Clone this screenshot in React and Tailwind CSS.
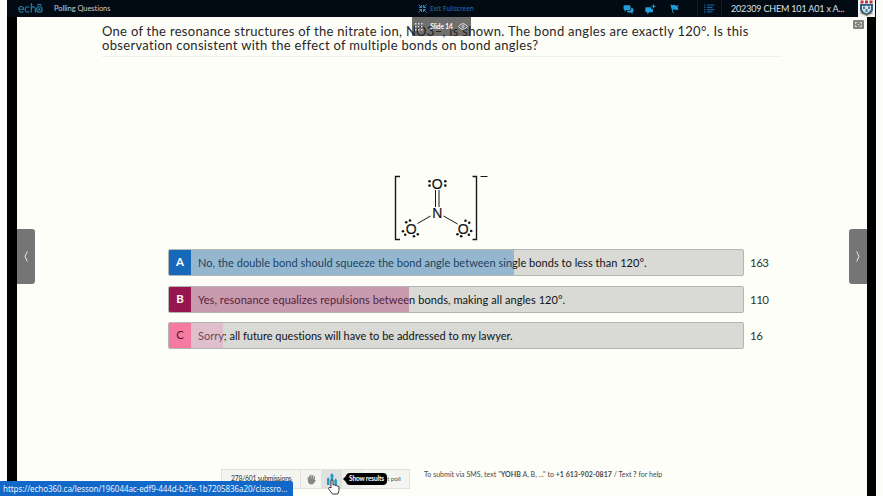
import React from "react";

const answers = [
  {
    letter: "A",
    text: "No, the double bond should squeeze the bond angle between single bonds to less than 120°.",
    count: 163,
    badge: "bg-[#1569b8] text-white font-bold",
    fill: "bg-[#2d82c5]/40 w-[323px]",
    track: "tracking-[0.03px]",
  },
  {
    letter: "B",
    text: "Yes, resonance equalizes repulsions between bonds, making all angles 120°.",
    count: 110,
    badge: "bg-[#981650] text-white font-bold",
    fill: "bg-[#ae3a72]/40 w-[218px]",
    track: "tracking-[0.06px]",
  },
  {
    letter: "C",
    text: "Sorry; all future questions will have to be addressed to my lawyer.",
    count: 16,
    badge: "bg-[#f57aa2] text-[#4b1530]",
    fill: "bg-[#eb96be]/40 w-[32px]",
    track: "tracking-[-0.01px]",
  },
];

function Header() {
  return (
    <header className="flex h-[17px] w-[869px] items-center bg-[#020a14] pl-[11px]">
      <div className="flex w-[36px] shrink-0 items-center">
        <svg width="25" height="13" viewBox="0 0 25 13" fill="none" stroke="#287fa9" strokeWidth="1.1">
          <path d="M1 7.2h4.6C5.6 3.6 0.8 3.6 0.8 7.3c0 3.2 3.2 3.6 4.6 2M11.3 5.4C9.4 4 7.2 5 7.2 7.4s2.3 3.5 4.1 2M13.3 1v9.6M13.3 7.2c0-3.2 4-3.2 4-.3v3.7" />
          <circle cx="21.4" cy="7.5" r="2.7" />
          <circle cx="21.4" cy="7.5" r="0.6" />
          <path d="M19.2 3.4c1.2-1.1 3.2-1.1 4.4 0" />
        </svg>
      </div>
      <span className="w-[364px] shrink-0 text-[7.5px] leading-[16px] tracking-[-0.06px] text-[#c6ced4]">Polling Questions</span>
      <svg className="shrink-0" width="9" height="9" viewBox="0 0 9 9" fill="none" stroke="#2f86c6" strokeWidth="1">
        <path d="M0.5 0.5l3 3M1 3.5h2.5V1M8.5 0.5l-3 3M8 3.5H5.5V1M0.5 8.5l3-3M1 5.500h2.500V8M8.500 8.500l-3-3M8 5.500H5.500V8" />
      </svg>
      <span className="w-[196px] shrink-0 pl-[3px] font-['Noto_Sans',sans-serif] text-[6.5px] font-medium leading-[17px] tracking-[-0.05px] text-[#20679f]">Exit Fullscreen</span>
      <div className="flex w-[74px] shrink-0 items-center pt-px">
        <svg width="11" height="9" viewBox="0 0 11 9" fill="#209fdb">
          <path d="M1.8 0.2h4.4q1.3 0 1.3 1.3v2.2Q7.500 5 6.200 5H3.500L1.600 6.700V5Q.5 4.700.5 3.500v-2Q.5.2 1.800.2Z" />
          <path d="M8.200 2.800q2.300 0 2.300 1.500v1.800q0 1-1 1.200v1.600L7.600 7.400H5Q4 7.300 4 5.700h2.600q1.600-.3 1.600-2Z" />
        </svg>
        <svg className="ml-[11px]" width="11" height="11" viewBox="0 0 11 11" fill="#209fdb">
          <path d="M1.200 3.200h5v1.900H8v2.200q0 1-1 1H4.400L2.300 10.200V8.300H1.200q-.9 0-.9-1V4.200q0-1 .9-1Z" />
          <path d="M8 0.400h1v1.400h1.500v1H9v1.500H8V2.800H6.600v-1H8Z" />
        </svg>
        <svg className="ml-[14px]" width="9" height="10" viewBox="0 0 9 10" fill="#209fdb">
          <path d="M.4.8 1.300.5l.4.800q1.800-1 3.300-.1T8.700 1.100L7.500 3.500 8.600 5.600q-2 .8-3.500 0t-2.300.1l1 3.500-.8.300Z" />
        </svg>
      </div>
      <div className="flex h-[17px] w-[25px] shrink-0 items-center justify-center border-x border-[#101c28]">
        <svg width="11" height="9" viewBox="0 0 11 9" stroke="#165f9b" strokeWidth="1.200">
          <path d="M0 1h1.500M3 1h7.500M0 3.300h1.500M3 3.300h5.500M0 5.600h1.500M3 5.600h7.500M0 7.900h1.500M3 7.900h5.500" />
        </svg>
      </div>
      <span className="w-[136px] shrink-0 whitespace-nowrap pl-[9px] text-[9px] leading-[16px] tracking-[-0.17px] text-[#dce1e4]">202309 CHEM 101 A01 x A...</span>
      <div className="flex h-[17px] w-[17px] shrink-0 items-center justify-center bg-[#f1f2f1]">
        <svg width="15" height="17" viewBox="0 0 15 17">
          <path d="M1 4h13v6q-1 4-6.500 5.500Q2 14 1 10Z" fill="#315f87" />
          <path d="M1.500 0.500h3v3h-3zM6 0.500h3v3H6zM10.500 0.500h3v3h-3z" fill="#bd3439" />
          <path d="M3 5.500l2 1 2.500-1 2.500 1 2-1v4q-2 3-4.500 4Q4 12 3 9.500Z" fill="#d9e2e4" />
          <path d="M4 7h2v2H4zM9 7h2v2H9zM6.500 9h2v3h-2z" fill="#527899" />
          <path d="M1 13q3 1 6.500 2.800Q11 14 14 13" fill="none" stroke="#b69a67" strokeWidth="1" />
        </svg>
      </div>
    </header>
  );
}

function Ion() {
  return (
    <svg width="96" height="70" viewBox="0 0 96 70" fill="none" stroke="#171717">
      <path d="M6 2.500H1.500V65.500H6M78.500 2.500h4v63h-4" strokeWidth="1.400" />
      <path d="M86.500 2.500h7" strokeWidth="1" />
      <path d="M41.500 16v17M45 16v17M36.500 42l-13 7.500M49.500 42l14 8" strokeWidth="1" />
      <g fill="#171717" stroke="#171717" strokeWidth="0.200" fontFamily="Liberation Sans, sans-serif" fontSize="14" textAnchor="middle">
        <text x="43.300" y="14.500">O</text>
        <text x="43.300" y="44.400">N</text>
        <text x="17.300" y="59.500">O</text>
        <text x="69.200" y="59.500">O</text>
      </g>
      <g fill="#171717" stroke="none">
        <circle cx="35.500" cy="7.300" r="1.300" /><circle cx="35.500" cy="11.600" r="1.300" />
        <circle cx="51.300" cy="7.300" r="1.300" /><circle cx="51.300" cy="11.600" r="1.300" />
        <circle cx="12.200" cy="48.300" r="1.300" /><circle cx="16" cy="46.500" r="1.300" />
        <circle cx="9" cy="57.200" r="1.300" /><circle cx="11.200" cy="60.700" r="1.300" />
        <circle cx="20" cy="62.300" r="1.300" /><circle cx="23.800" cy="60.300" r="1.300" />
        <circle cx="71.500" cy="46.700" r="1.300" /><circle cx="75.200" cy="48.700" r="1.300" />
        <circle cx="77.200" cy="57" r="1.300" /><circle cx="74.900" cy="60.700" r="1.300" />
        <circle cx="63.500" cy="60.300" r="1.300" /><circle cx="67.200" cy="62.300" r="1.300" />
      </g>
    </svg>
  );
}

function Answer({ item }) {
  return (
    <li className="flex h-[27px] items-center">
      <div className="relative flex h-[27px] w-[576px] overflow-hidden rounded-[2px] border border-[#b5b6b3] bg-[#d9dad6]">
        <div className={`flex w-[22px] items-center justify-center pb-px text-[11.5px] ${item.badge}`}>{item.letter}</div>
        <span className={`absolute left-[29px] top-0 whitespace-nowrap text-[11px] leading-[25px] text-[#101214] ${item.track}`}>{item.text}</span>
        <div className={`relative ${item.fill}`} />
      </div>
      <span className="ml-[6px] text-[11.5px] leading-[25px] tracking-[-0.5px] text-[#30322f]">{item.count}</span>
    </li>
  );
}

function Toolbar() {
  return (
    <div className="relative flex h-[20px] w-[189px] border border-[#e1e2dd] bg-[#f4f5f0] text-[7px] text-[#555]">
      <span className="w-[79px] shrink-0 whitespace-nowrap border-r border-[#e1e2dd] pl-[9px] text-[6.8px] leading-[17px] tracking-[-0.2px] text-[#333]">278/601 submissions</span>
      <div className="flex w-[20px] shrink-0 items-center justify-center">
        <svg width="9" height="11" viewBox="0 0 9 11" fill="#858681">
          <path d="M.5 3.300 1.500 3l.5 2.500V1.500h1.100V5l.4-4.300h1.100V5l.7-4h1v4.500l1-3.500.9.200L7.500 6l1-.3.300.800-2 2.700q-.7 1.300-2.500 1.300Q1.700 10.500 1 7.500Z" />
        </svg>
      </div>
      <div className="flex w-[21px] shrink-0 items-center justify-center bg-[#dfe1df]">
        <svg width="10" height="13" viewBox="0 0 10 13" fill="#239bc9">
          <path d="M0 6h2.500v6H0zM3.700 3h2.500v9H3.700zM7.400 7h2.500v5H7.400zM4.950 0l2.200 3.300h-4.400zM1.250 4.200l1.500 2h-3zM8.650 5.200l1.400 2H7.200z" />
        </svg>
      </div>
      <div className="w-[20px] shrink-0 bg-[#ecede9]" />
      <span className="shrink-0 pl-[25px] text-[6.5px] leading-[17px] tracking-[-0.1px]">t poll</span>
      <div className="absolute left-[121px] top-[3px] flex h-[12px] items-center">
        <div className="h-0 w-0 border-y-[4px] border-r-[4px] border-y-transparent border-r-black" />
        <div className="-ml-px flex h-[12px] w-[41px] items-center justify-center whitespace-nowrap rounded-[4px] bg-black pb-px text-[6.500px] font-bold tracking-[-0.15px] text-white">Show results</div>
      </div>
      <svg className="absolute left-[105px] top-[9px]" width="14" height="16" viewBox="0 0 14 16" fill="#fff" stroke="#222" strokeWidth="0.9">
        <path d="M4 9V2q0-1.300 1-1.300T6 2v4q1.500-.8 2 .5 1.500-.8 2 .6 2-.5 2 1.200v3.200L10.800 15H5.500L2 10.500Q1 9 2 8.500T4 9Z" />
      </svg>
    </div>
  );
}

export default function App() {
  return (
    <div className="relative h-[496px] w-[883px] overflow-hidden bg-[#fbfbf9] pl-[7px] font-[Lato,sans-serif]">
      <Header />
      <main className="relative flex h-[479px] w-[869px] border-l-[10px] border-r-[9px] border-black bg-[#fefef9]">
        <button className="mt-[212px] flex h-[55px] w-[18px] shrink-0 items-center justify-center rounded-r-[3px] bg-[#757575]">
          <svg width="4" height="11" viewBox="0 0 4 11" fill="none" stroke="#eee"><path d="M3.300.5 1 5.500l2.300 5" /></svg>
        </button>
        <div className="flex w-[814px] shrink-0 flex-col">
          <h1 className="ml-[67px] h-[40px] w-[680px] whitespace-nowrap border-b border-[#f0f0ec] pt-[7px] text-[13px] leading-[14px] text-[#272727]">
            <span className="block tracking-[0.29px]">One of the resonance structures of the nitrate ion, NO3–, is shown. The bond angles are exactly 120°. Is this</span>
            <span className="block tracking-[0.31px]">observation consistent with the effect of multiple bonds on bond angles?</span>
          </h1>
          <div className="ml-[359px] mt-[117px] h-[70px]"><Ion /></div>
          <ul className="ml-[133px] mt-[5px] flex flex-col gap-[9.500px]">
            {answers.map((item) => <Answer key={item.letter} item={item} />)}
          </ul>
          <footer className="ml-[186px] mt-[120px] flex items-start">
            <Toolbar />
            <p className="ml-[14px] whitespace-nowrap text-[7px] leading-[10px] tracking-[0.03px] text-[#494949]">To submit via SMS, text "<b>YOHB</b> A, B, ..." to <b>+1 613-902-0817</b> / Text <b>?</b> for help</p>
          </footer>
        </div>
        <button className="mt-[212px] flex h-[55px] w-[18px] shrink-0 items-center justify-center rounded-l-[3px] bg-[#757575]">
          <svg width="4" height="11" viewBox="0 0 4 11" fill="none" stroke="#eee"><path d="M.7.5 3 5.500l-2.300 5" /></svg>
        </button>
        <div className="absolute left-[395px] top-0 flex h-[19px] w-[59px] items-center justify-between bg-[#222]/65 px-[3px] text-[6.500px] font-bold tracking-[-0.1px] text-white">
          <svg width="8" height="8" viewBox="0 0 8 8" fill="#ddd"><path d="M0 0h1.500v1.500H0zM3 0h1.500v1.500H3zM6 0h1.500v1.500H6zM0 3h1.500v1.500H0zM3 3h1.500v1.500H3zM6 3h1.500v1.500H6zM0 6h1.500v1.500H0zM3 6h1.500v1.500H3zM6 6h1.500v1.500H6z" /></svg>
          <span className="ml-[2px]">Slide 14</span>
          <svg width="10" height="7" viewBox="0 0 10 7" fill="none" stroke="#ddd"><path d="M.5 3.500Q5-2.200 9.500 3.500 5 9.200.5 3.500Z" /><circle cx="5" cy="3.500" r="1" /></svg>
        </div>
        <div className="absolute right-[3px] top-[3px] flex h-[9px] w-[11px] items-center justify-center rounded-[1px] bg-[#858580]">
          <svg width="7" height="5" viewBox="0 0 7 5" fill="none" stroke="#eee" strokeWidth=".8"><path d="M.5 2V.5H2M4.500.5h2V2M.5 3v1.500H2M4.500 4.500h2V3M2.800 2.500h1.500" /></svg>
        </div>
      </main>
      <div className="absolute bottom-0 left-0 h-[15px] w-[293px] whitespace-nowrap rounded-tr-[2px] bg-[#1268c9] pl-[3px] font-['Noto_Sans',sans-serif] text-[8px] leading-[15px] tracking-[-0.06px] text-[#e5f0fa]">https://echo360.ca/lesson/196044ac-edf9-444d-b2fe-1b7205836a20/classro...</div>
    </div>
  );
}
